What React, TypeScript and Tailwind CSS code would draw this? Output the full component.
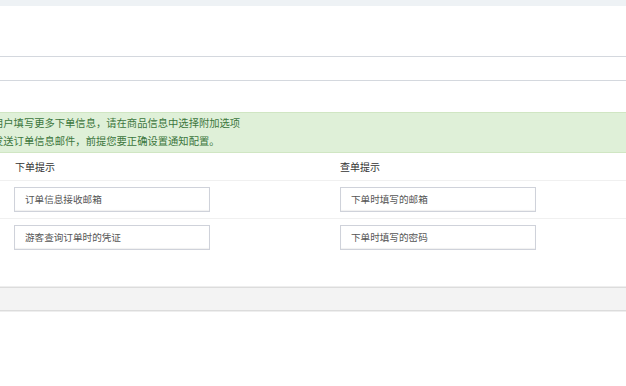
import React from "react";

const font = { fontFamily: '"Noto Sans CJK SC", "Noto Sans", sans-serif' };

function Input({ text }: { text: string }) {
  return (
    <div className="w-[196px] h-[25px] border border-[#cfd2da] shadow-[inset_0_-1px_1px_rgba(0,0,0,0.06)] flex items-center pl-[10px] text-[9.6px] text-[#555] bg-white">
      {text}
    </div>
  );
}

export default function App() {
  return (
    <div className="w-[626px] h-[386px] bg-white overflow-hidden" style={font}>
      <div className="h-[6px] bg-[#eef2f5]" />
      <div className="h-[51px] border-b border-[#d4d8de]" />
      <div className="h-[24px] border-b border-[#d4d8de]" />
      <div className="h-[31px]" />
      <div className="h-[41px] bg-[#dff0d8] border-y border-[#d0e6c3] text-[#3c763d] text-[10.3px] leading-[18px] pt-[1px] overflow-hidden whitespace-nowrap">
        <div className="ml-[-7px]">用户填写更多下单信息，请在商品信息中选择附加选项</div>
        <div className="ml-[-7px]">发送订单信息邮件，前提您要正确设置通知配置。</div>
      </div>
      <div className="h-[28px] border-b border-[#f0f0f0] grid grid-cols-[340px_1fr] items-center text-[10px] text-[#333]">
        <div className="pl-[15px]">下单提示</div>
        <div>查单提示</div>
      </div>
      <div className="h-[38px] border-b border-[#f0f0f0] grid grid-cols-[340px_1fr] items-center">
        <div className="pl-[14px]">
          <Input text="订单信息接收邮箱" />
        </div>
        <div>
          <Input text="下单时填写的邮箱" />
        </div>
      </div>
      <div className="h-[36px] grid grid-cols-[340px_1fr] items-center">
        <div className="pl-[14px]">
          <Input text="游客查询订单时的凭证" />
        </div>
        <div>
          <Input text="下单时填写的密码" />
        </div>
      </div>
      <div className="h-[32px]" />
      <div className="h-[24px] bg-[#f3f3f3] border-y border-[#dcdcdc] shadow-[0_-1px_0_#eeeeee,0_1px_0_#eeeeee]" />
    </div>
  );
}
